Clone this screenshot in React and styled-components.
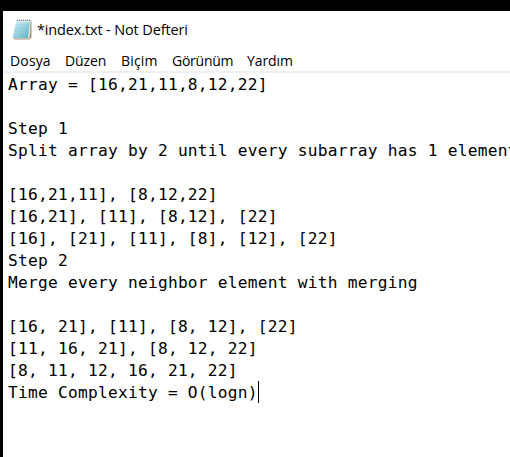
import React from "react";
import styled, { createGlobalStyle } from "styled-components";

const GlobalStyle = createGlobalStyle`
  * { box-sizing: border-box; }
  body { margin: 0; background: #000; overflow: hidden; }
`;

const Desktop = styled.div`
  height: 100vh;
  padding: 11px 0 0 3px;
  background: #000;
  overflow: hidden;
`;

const Window = styled.main`
  display: flex;
  flex-direction: column;
  height: 100%;
  background: #fff;
  color: #000;
`;

const TitleBar = styled.header`
  display: flex;
  align-items: center;
  flex: none;
  height: 38px;
  padding-left: 9px;
`;

const Title = styled.h1`
  margin: 0 0 0 5px;
  font: 400 14.5px/20px "Open Sans", "Noto Sans", sans-serif;
  letter-spacing: -0.14px;
  white-space: pre;
`;

const MenuBar = styled.nav`
  display: flex;
  align-items: center;
  gap: 14px;
  flex: none;
  height: 24px;
  padding: 1px 0 0 7px;
  border-bottom: 2px solid #f0f0f0;
`;

const MenuItem = styled.span`
  width: ${(p) => p.$width}px;
  font: 400 14px/20px "Open Sans", "Noto Sans", sans-serif;
  letter-spacing: ${(p) => p.$tracking}px;
  white-space: nowrap;
`;

const Editor = styled.section`
  flex: 1;
  padding: 1px 0 0 5px;
  overflow: hidden;
`;

const Line = styled.div`
  display: flex;
  height: 22px;
  font: 400 16.2px/22px "DejaVu Sans Mono", monospace;
  letter-spacing: 0.247px;
  white-space: pre;
`;

const Caret = styled.span`
  width: 1px;
  height: 22px;
  margin-top: -1px;
  background: #000;
`;

const NotepadIcon = () => (
  <svg width="20" height="22" viewBox="0 0 20 22" aria-hidden="true">
    <defs>
      <linearGradient id="page" x1="0" y1="0" x2="1" y2="1">
        <stop offset="0" stopColor="#d3f0f5" />
        <stop offset="0.5" stopColor="#9bd5e2" />
        <stop offset="1" stopColor="#55afc5" />
      </linearGradient>
    </defs>
    <path d="M5 1.5H19.5V18.5L17.5 20.5H3L1 19.2Z" fill="#a39a82" />
    <path d="M5 1.5H18.8L17.4 19.6H2.5Z" fill="#e9e4d5" />
    <path d="M4.3 1.5H18L16 19H0.7Z" fill="url(#page)" />
    <path d="M4.3 1.5H18L17.8 3.6H3.8Z" fill="#d5e8ec" />
    <path d="M5 1.3H18" stroke="#819297" strokeWidth="1.4" strokeDasharray="1 1" />
    <path d="M4.2 6H16.8M3.7 9H16.5M3.2 12H16.2M2.7 15H15.7" stroke="#83c1cf" strokeWidth="0.6" opacity="0.6" />
  </svg>
);

const menus = [
  ["Dosya", 41, 0.15],
  ["Düzen", 42, -0.1],
  ["Biçim", 37, 0.15],
  ["Görünüm", 61, -0.25],
  ["Yardım", 47, -0.1],
];

const lines = [
  "Array = [16,21,11,8,12,22]",
  "",
  "Step 1",
  "Split array by 2 until every subarray has 1 element",
  "",
  "[16,21,11], [8,12,22]",
  "[16,21], [11], [8,12], [22]",
  "[16], [21], [11], [8], [12], [22]",
  "Step 2",
  "Merge every neighbor element with merging",
  "",
  "[16, 21], [11], [8, 12], [22]",
  "[11, 16, 21], [8, 12, 22]",
  "[8, 11, 12, 16, 21, 22]",
  "Time Complexity = O(logn)",
];

export default function App() {
  return (
    <>
      <GlobalStyle />
      <Desktop>
        <Window>
          <TitleBar>
            <NotepadIcon />
            <Title>*index.txt - Not Defteri</Title>
          </TitleBar>
          <MenuBar>
            {menus.map(([label, width, tracking]) => (
              <MenuItem key={label} $width={width} $tracking={tracking}>{label}</MenuItem>
            ))}
          </MenuBar>
          <Editor>
            {lines.map((text, i) => (
              <Line key={i}>
                {text}
                {i === lines.length - 1 && <Caret />}
              </Line>
            ))}
          </Editor>
        </Window>
      </Desktop>
    </>
  );
}
